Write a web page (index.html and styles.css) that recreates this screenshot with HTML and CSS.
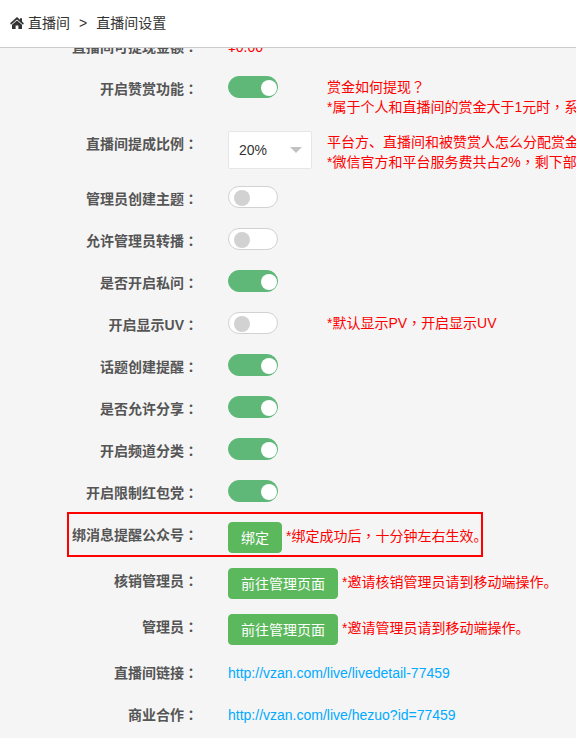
FILE: index.html
```html
<!DOCTYPE html>
<html lang="zh-CN">
  <head>
    <meta charset="UTF-8" />
    <meta name="viewport" content="width=device-width, initial-scale=1.0" />
    <title>直播间设置</title>
    <link rel="stylesheet" href="styles.css">
  </head>
  <body>
    <header class="crumbs">
      <svg class="home-icon" viewBox="0 0 14 12" aria-hidden="true">
        <path d="M7 0 L0.4 6 Q0 6.6 0.6 7.2 Q1.2 7.6 1.8 7.1 L7 2.6 L12.2 7.1 Q12.8 7.6 13.4 7.2 Q14 6.6 13.6 6 L12 4.5 V1.2 H10 V2.7 Z" />
        <path d="M7 3.4 L2 7.8 V12 H5.6 V8.6 H8.4 V12 H12 V7.8 Z" />
      </svg>
      <a href="#">直播间</a>
      <span class="sep">&gt;</span>
      <span>直播间设置</span>
    </header>

    <main class="settings">
      <div class="row">
        <span class="label">直播间可提现金额<span class="mid">：</span></span>
        <div class="field"><span class="amount">¥0.00</span></div>
      </div>
      <div class="row">
        <label class="label" for="reward">开启赞赏功能<span class="mid">：</span></label>
        <div class="field">
          <div class="control"><input class="switch" type="checkbox" id="reward" checked /></div>
          <div class="hint">赏金如何提现<span class="mid">？</span><br />*属于个人和直播间的赏金大于1元时<span class="mid">，</span>系</div>
        </div>
      </div>
      <div class="row">
        <label class="label" for="ratio">直播间提成比例<span class="mid">：</span></label>
        <div class="field">
          <div class="control select-box">
            <select id="ratio">
              <option>20%</option>
            </select>
          </div>
          <div class="hint">平台方、直播间和被赞赏人怎么分配赏金<br />*微信官方和平台服务费共占2%<span class="mid">，</span>剩下部</div>
        </div>
      </div>
      <div class="row">
        <label class="label" for="topic">管理员创建主题<span class="mid">：</span></label>
        <div class="field"><input class="switch" type="checkbox" id="topic" /></div>
      </div>
      <div class="row">
        <label class="label" for="relay">允许管理员转播<span class="mid">：</span></label>
        <div class="field"><input class="switch" type="checkbox" id="relay" /></div>
      </div>
      <div class="row">
        <label class="label" for="ask">是否开启私问<span class="mid">：</span></label>
        <div class="field"><input class="switch" type="checkbox" id="ask" checked /></div>
      </div>
      <div class="row">
        <label class="label" for="uv">开启显示UV<span class="mid">：</span></label>
        <div class="field">
          <div class="control"><input class="switch" type="checkbox" id="uv" /></div>
          <div class="hint">*默认显示PV<span class="mid">，</span>开启显示UV</div>
        </div>
      </div>
      <div class="row">
        <label class="label" for="remind">话题创建提醒<span class="mid">：</span></label>
        <div class="field"><input class="switch" type="checkbox" id="remind" checked /></div>
      </div>
      <div class="row">
        <label class="label" for="share">是否允许分享<span class="mid">：</span></label>
        <div class="field"><input class="switch" type="checkbox" id="share" checked /></div>
      </div>
      <div class="row">
        <label class="label" for="channel">开启频道分类<span class="mid">：</span></label>
        <div class="field"><input class="switch" type="checkbox" id="channel" checked /></div>
      </div>
      <div class="row">
        <label class="label" for="limit">开启限制红包党<span class="mid">：</span></label>
        <div class="field"><input class="switch" type="checkbox" id="limit" checked /></div>
      </div>
      <div class="row marked">
        <label class="label" for="bind">绑消息提醒公众号<span class="mid">：</span></label>
        <div class="field action">
          <button class="btn" type="button" id="bind">绑定</button>
          <span class="hint">*绑定成功后<span class="mid">，</span>十分钟左右生效。</span>
        </div>
      </div>
      <div class="row">
        <label class="label" for="verifier">核销管理员<span class="mid">：</span></label>
        <div class="field action">
          <button class="btn" type="button" id="verifier">前往管理页面</button>
          <span class="hint">*邀请核销管理员请到移动端操作。</span>
        </div>
      </div>
      <div class="row">
        <label class="label" for="manager">管理员<span class="mid">：</span></label>
        <div class="field action">
          <button class="btn" type="button" id="manager">前往管理页面</button>
          <span class="hint">*邀请管理员请到移动端操作。</span>
        </div>
      </div>
      <div class="row">
        <span class="label">直播间链接<span class="mid">：</span></span>
        <div class="field"><a class="link" href="http://vzan.com/live/livedetail-77459">http://vzan.com/live/livedetail-77459</a></div>
      </div>
      <div class="row">
        <span class="label">商业合作<span class="mid">：</span></span>
        <div class="field"><a class="link" href="http://vzan.com/live/hezuo?id=77459">http://vzan.com/live/hezuo?id=77459</a></div>
      </div>
    </main>
  </body>
</html>
```
FILE: styles.css
```css
*,
*::before {
  box-sizing: border-box;
}
body {
  margin: 0;
  background-color: #f5f5f5;
  color: #333;
  font-family: "Liberation Sans", "Noto Sans CJK SC", sans-serif;
  font-size: 14px;
  line-height: 20px;
  overflow: hidden;
}
.crumbs {
  position: fixed;
  top: 0;
  left: 0;
  right: 0;
  z-index: 2;
  display: flex;
  align-items: center;
  height: 48px;
  padding: 0 10px 2px;
  background-color: #fff;
  border-bottom: 1px solid #ccc;
}
.crumbs a {
  color: inherit;
  text-decoration: none;
}
.home-icon {
  width: 14px;
  height: 12px;
  margin-right: 4px;
  fill: #333;
}
.sep {
  margin: 0 9px;
}
.settings {
  padding-top: 34px;
}
.row {
  display: flex;
  gap: 30px;
  min-height: 27px;
  margin-bottom: 15px;
  white-space: nowrap;
}
.label {
  flex: 0 0 198px;
  padding-top: 3px;
  color: #555;
  font-weight: bold;
  text-align: right;
}
/* punctuation centred in its cell */
.mid {
  font-family: "Noto Sans CJK TC", sans-serif;
  line-height: 1;
  -webkit-locale: "zh-TW";
}
.field {
  display: flex;
  align-items: flex-start;
  gap: 15px;
}
.control {
  width: 84px;
}
.hint {
  padding-top: 1px;
  margin-bottom: -1px;
  color: #f00;
}
.amount {
  padding-top: 3px;
  color: #f00;
}
.switch {
  appearance: none;
  display: block;
  width: 50px;
  height: 22px;
  margin: 0;
  padding: 3px 5px;
  background-color: #fff;
  border: 1px solid #d2d2d2;
  border-radius: 20px;
  cursor: pointer;
}
.switch::before {
  content: "";
  display: block;
  width: 16px;
  height: 16px;
  background-color: #d2d2d2;
  border-radius: 50%;
}
.switch:checked {
  padding: 3px 0 3px 32px;
  background-color: #5fb878;
  border-color: #5fb878;
}
.switch:checked::before {
  background-color: #fff;
}
.select-box {
  position: relative;
}
.select-box::after {
  content: "";
  position: absolute;
  top: 16px;
  right: 10px;
  border: 6px solid transparent;
  border-top-color: #c2c2c2;
  border-bottom: 0;
  pointer-events: none;
}
select {
  appearance: none;
  display: block;
  width: 100%;
  height: 38px;
  padding: 0 10px;
  background-color: #fff;
  border: 1px solid #e6e6e6;
  border-radius: 2px;
  color: #333;
  font: inherit;
}
.action {
  gap: 4px;
}
.action .hint {
  padding-top: 4px;
}
.btn {
  height: 31px;
  padding: 0 12px;
  background-color: #5cb85c;
  border: 1px solid #5cb85c;
  border-radius: 4px;
  color: #fff;
  font: inherit;
  cursor: pointer;
}
.marked {
  position: relative;
}
.marked::before {
  content: "";
  position: absolute;
  top: -10px;
  left: 67px;
  width: 416px;
  height: 45px;
  border: 2px solid #f00;
  pointer-events: none;
}
.link {
  padding-top: 3px;
  color: #0af;
  text-decoration: none;
}
```
